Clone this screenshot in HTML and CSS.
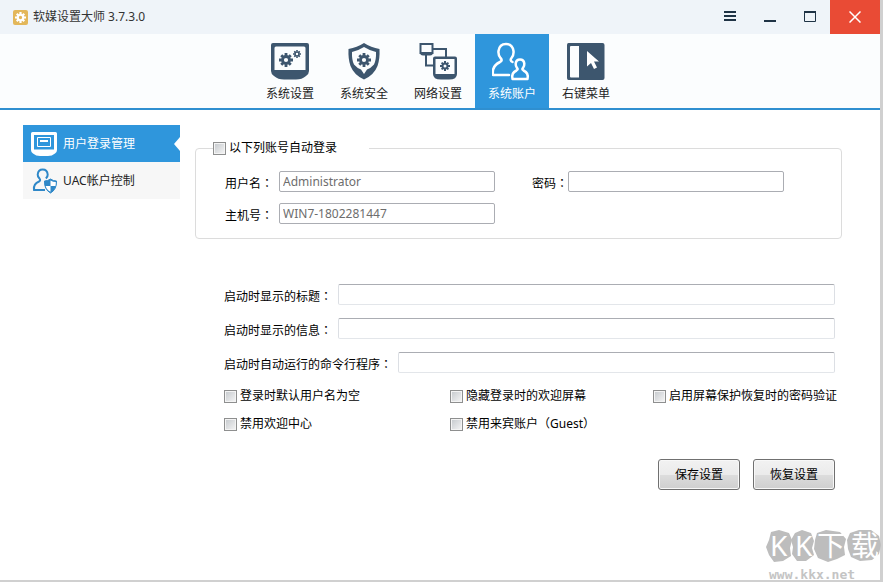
FILE: index.html
```
<!DOCTYPE html>
<html lang="zh-CN">
<head>
    <meta charset="UTF-8">
    <meta name="viewport" content="width=device-width, initial-scale=1.0">
    <title>软媒设置大师</title>
    <link rel="stylesheet" href="styles.css">
</head>
<body>

    <!-- shared gear shape -->
    <svg class="defs" width="0" height="0">
        <symbol id="gear" viewBox="-10 -10 20 20">
            <circle r="5" fill="none" stroke="currentColor" stroke-width="4"/>
            <path d="M0-6v-4M0 6v4M-6 0h-4M6 0h4M4.2-4.2l2.6-2.6M4.2 4.2l2.6 2.6M-4.2 4.2l-2.6 2.6M-4.2-4.2l-2.6-2.6" stroke="currentColor" stroke-width="4"/>
        </symbol>
    </svg>

    <div class="window">
        <header class="titlebar">
            <span class="logo"><svg width="11" height="11"><use href="#gear"/></svg></span>
            <h1>软媒设置大师 3.7.3.0</h1>
            <div class="window-buttons">
                <button aria-label="菜单"><svg width="12" height="12" viewBox="0 0 12 12"><path d="M0 1h12M0 5h12M0 9h12" stroke="currentColor" stroke-width="2"/></svg></button>
                <button aria-label="最小化"><svg width="12" height="12" viewBox="0 0 12 12"><path d="M0 10h12" stroke="currentColor" stroke-width="2"/></svg></button>
                <button aria-label="最大化"><svg width="12" height="12" viewBox="0 0 12 12"><path d="M.5 1v9.500h11V1" fill="none" stroke="currentColor"/><path d="M0 1h12" stroke="currentColor" stroke-width="2"/></svg></button>
                <button class="close" aria-label="关闭"><svg width="12" height="12" viewBox="0 0 12 12"><path d="M.5.5l11 11M11.500.5l-11 11" stroke="currentColor" stroke-width="1.500"/></svg></button>
            </div>
        </header>

        <nav class="tabs">
            <a href="#">
                <svg width="40" height="40" viewBox="0 0 40 40">
                    <path fill="currentColor" fill-rule="evenodd" d="M3 2h34q2 0 2 2v26q0 3-3 5-4 3.500-10 3.500H14Q8 38.500 4 35q-3-2-3-5V4q0-2 2-2zM6 5.500q-1.500 0-1.500 1.500v22h31V7q0-1.500-1.500-1.500z"/>
                    <use href="#gear" x="9" y="12" width="14" height="14"/>
                    <use href="#gear" x="23" y="9" width="8" height="8"/>
                </svg>
                系统设置
            </a>
            <a href="#">
                <svg width="40" height="40" viewBox="0 0 40 40">
                    <path fill="currentColor" fill-rule="evenodd" d="M20 2q7 4.500 15.500 6 .5 10-2 17Q30 34 20 38.500 10 34 6.500 25 4 18 4.500 8 13 6.500 20 2zM20 6q-5.500 3.500-12 5-.3 8 2 12.500Q13 27 17 28.500L20 33l3-4.500q4-1.500 7-5 2.300-4.500 2-12.500-6.500-1.500-12-5z"/>
                    <use href="#gear" x="13" y="12" width="14" height="14"/>
                </svg>
                系统安全
            </a>
            <a href="#">
                <svg width="40" height="40" viewBox="0 0 40 40">
                    <path fill="none" stroke="currentColor" stroke-width="2" d="M15 8h13v8M8 14v10.500h8"/>
                    <path fill="none" stroke="currentColor" stroke-width="2" d="M2.500 3h12v9h-12z"/>
                    <path fill="currentColor" d="M2 11h13q0 3.500-3 3.500H5Q2 14.500 2 11z"/>
                    <path fill="currentColor" fill-rule="evenodd" d="M17 15.500h20q2 0 2 2V33q0 5.500-8 5.500h-8q-8 0-8-5.500V17.500q0-2 2-2zM17.500 18v15h19V18z"/>
                    <use href="#gear" x="22" y="20" width="10" height="10"/>
                </svg>
                网络设置
            </a>
            <a href="#" class="active">
                <svg width="40" height="40" viewBox="0 0 40 40">
                    <g fill="none" stroke="currentColor" stroke-width="2.500" stroke-linejoin="round" stroke-linecap="round">
                        <path d="M17 34H1q-1.500-9 7-13 3-1.500.5-4-2.500-3-2-7Q7.500 3 14 3t7.500 7q.5 4-2 7-2 2.500 1 4"/>
                        <path d="M20.500 38q-1.500-6 4-8.500 2-1 .5-2.500-1.500-2-1.300-4.500.5-4 4.300-4t4.300 4q.2 2.500-1.300 4.500-1.500 1.500.5 2.500 5.500 2.500 4 8.500z"/>
                    </g>
                </svg>
                系统账户
            </a>
            <a href="#">
                <svg width="40" height="40" viewBox="0 0 40 40">
                    <path fill="currentColor" fill-rule="evenodd" d="M2.500 2h34q2 0 2 2v33q0 2-2 2h-34q-1.500 0-1.500-2V4q0-2 1.500-2zM5 5q-1 0-1 1v29.500q0 1 1 1h8V5z"/>
                    <path fill="#fff" d="M21 10v15.500l4-3.500 3 6 3-1.500-3-6h5z"/>
                </svg>
                右键菜单
            </a>
        </nav>

        <div class="body">
            <aside class="sidebar">
                <a href="#" class="active">
                    <svg width="26" height="26" viewBox="0 0 26 26">
                        <path fill="currentColor" fill-rule="evenodd" d="M1.500 1h23Q26 1 26 2.500V19q0 2-2 3.500-3 2.500-7 2.500H9q-4 0-7-2.500Q0 21 0 19V2.500Q0 1 1.500 1zM3 4v14.500h20V4z"/>
                        <path fill="none" stroke="currentColor" d="M6.500 6.500h13v9h-13z"/>
                        <path stroke="currentColor" stroke-width="2" d="M9 10h8"/>
                    </svg>
                    用户登录管理
                </a>
                <a href="#">
                    <svg class="blue" width="26" height="26" viewBox="0 0 26 26">
                        <path fill="none" stroke="currentColor" stroke-width="2" stroke-linejoin="round" d="M14 22H3q-1-6 5-8.500 2-1 .5-3Q6.500 8.500 6.700 6.500q.5-5 5-5t5 5q.2 2-1.800 4"/>
                        <path fill="currentColor" stroke="currentColor" d="M19.500 11q2.800 2 6 2 .3 8.500-6 12-6.300-3.500-6-12 3.200 0 6-2z"/>
                        <path fill="#fff" d="M19.500 12.500V18h5q.4-2 .3-4-2.800 0-5.300-1.500zM14.700 18h4.800v5.800q-4-2-4.800-5.800z"/>
                    </svg>
                    UAC帐户控制
                </a>
            </aside>

            <main>
                <fieldset>
                    <legend>
                        <label class="check"><input type="checkbox">以下列账号自动登录</label>
                    </legend>
                    <div class="login-row">
                        <label for="userName">用户名<span class="mark" lang="zh-TW">：</span></label>
                        <input type="text" id="userName" value="Administrator">
                        <label for="password" class="password-label">密码<span class="mark" lang="zh-TW">：</span></label>
                        <input type="password" id="password">
                    </div>
                    <div class="login-row">
                        <label for="hostName">主机号<span class="mark" lang="zh-TW">：</span></label>
                        <input type="text" id="hostName" value="WIN7-1802281447">
                    </div>
                </fieldset>

                <form class="startup">
                    <div class="row">
                        <label for="bootTitle">启动时显示的标题<span class="mark" lang="zh-TW">：</span></label>
                        <input type="text" id="bootTitle">
                    </div>
                    <div class="row">
                        <label for="bootMessage">启动时显示的信息<span class="mark" lang="zh-TW">：</span></label>
                        <input type="text" id="bootMessage">
                    </div>
                    <div class="row">
                        <label for="bootCommand">启动时自动运行的命令行程序<span class="mark" lang="zh-TW">：</span></label>
                        <input type="text" id="bootCommand">
                    </div>
                    <div class="checks">
                        <label class="check"><input type="checkbox">登录时默认用户名为空</label>
                        <label class="check"><input type="checkbox">隐藏登录时的欢迎屏幕</label>
                        <label class="check"><input type="checkbox">启用屏幕保护恢复时的密码验证</label>
                        <label class="check"><input type="checkbox">禁用欢迎中心</label>
                        <label class="check"><input type="checkbox"><span>禁用来宾账户<span class="mark" lang="zh-TW">（</span>Guest<span class="mark" lang="zh-TW">）</span></span></label>
                    </div>
                    <div class="actions">
                        <button type="button">保存设置</button>
                        <button type="button">恢复设置</button>
                    </div>
                </form>
            </main>
        </div>
    </div>

    <!-- site mark in the corner -->
    <svg class="watermark" width="117" height="70" viewBox="0 -16 117 70">
        <g fill="#bdbdbd">
            <path d="M5 4l8-2 10 3 3 7-2 8 1 8-8 5-9 1-5-7-3-8 3-7z"/>
            <path d="M29 5l7-3 9 3 3 8-2 7 2 7-8 6-9 0-5-7 1-7-2-7z"/>
            <path d="M51 5l9-3 14 2 6 7-2 8 1 8-8 4-9 3-10-4-4-9 1-9z"/>
            <path d="M84 5l9-3 12 0 8 6 2 9-2 9-7 6-12 1-9-4-3-8-1-9z"/>
        </g>
        <g class="watermark-name">
            <text x="4" y="28">K</text>
            <text x="29" y="28">K</text>
            <text x="51" y="28">下</text>
            <text x="85" y="28">载</text>
        </g>
        <text class="watermark-url" x="3" y="51">www.kkx.net</text>
    </svg>

</body>
</html>
```
FILE: styles.css
```
* {
    box-sizing: border-box;
}
body {
    margin: 0;
    font-family: "Noto Sans", "Noto Sans CJK SC", sans-serif;
    font-size: 12px;
    line-height: 18px;
    color: #000;
    background: #fff;
}
a {
    color: inherit;
    text-decoration: none;
}
button, input {
    font: inherit;
    margin: 0;
}
.defs {
    position: absolute;
}
.window {
    min-height: 100vh;
    border-right: 3px solid #d0d0d0;
    border-bottom: 2px solid #d0d0d0;
}

/* title bar */
.titlebar {
    display: flex;
    align-items: center;
    height: 34px;
    padding-left: 13px;
    background: #eff4f9;
}
.logo {
    display: flex;
    align-items: center;
    justify-content: center;
    width: 15px;
    height: 15px;
    margin-right: 5px;
    border-radius: 2px;
    background: #e3b75a;
    color: #fff;
}
h1 {
    margin: 0;
    font-size: 12px;
    font-weight: normal;
    color: #333;
}
.window-buttons {
    display: flex;
    margin-left: auto;
}
.window-buttons button {
    display: flex;
    align-items: center;
    justify-content: center;
    width: 40px;
    height: 34px;
    padding: 0;
    border: none;
    background: none;
    color: #1f3345;
}
.window-buttons .close {
    width: 50px;
    background: #e94b35;
    color: #fff;
}

/* top tabs */
.tabs {
    display: flex;
    justify-content: center;
    padding-right: 4px;
    background: #fbfdfe;
    border-bottom: 2px solid #2f8fd0;
}
.tabs a {
    display: flex;
    flex-direction: column;
    align-items: center;
    gap: 4px;
    width: 74px;
    height: 74px;
    padding-top: 7px;
    color: #222;
}
.tabs svg {
    color: #3d566e;
}
.tabs .active {
    background: #2f96dc;
    color: #fff;
}
.tabs .active svg {
    color: #fff;
}

.body {
    display: flex;
    gap: 15px;
    padding: 15px 38px 15px 23px;
}

/* left menu */
.sidebar {
    flex: none;
    width: 157px;
}
.sidebar a {
    display: flex;
    align-items: center;
    gap: 6px;
    height: 37px;
    padding-left: 8px;
    background: #f7f7f7;
    color: #222;
}
.sidebar .active {
    background: #2f96dc;
    color: #fff;
}
.sidebar .active::after {
    content: "";
    margin-left: auto;
    border: 7px solid transparent;
    border-left: none;
    border-right: 6px solid #fff;
}
.blue {
    color: #2f88c8;
}

/* settings */
main {
    flex: 1;
    min-width: 0;
    padding-top: 14px;
}
fieldset {
    margin: 0;
    padding: 14px 17px 14px;
    border: 1px solid #dcdcdc;
    border-radius: 4px;
}
legend {
    width: 156px;
    padding: 0;
}
label {
    white-space: nowrap;
}
/* punctuation centred in its cell */
.mark {
    font-family: "Noto Sans CJK TC", sans-serif;
    line-height: 1;
}
.check {
    display: flex;
    align-items: center;
    gap: 3px;
}
.check input {
    appearance: none;
    flex: none;
    width: 13px;
    height: 13px;
    border: 1px solid #8e8f8f;
    background: linear-gradient(135deg, #c4c8cc, #f6f6f6);
    box-shadow: inset 0 0 0 1px #f4f4f4;
}
.check input:checked {
    background: #2f96dc;
}
input[type="text"], input[type="password"] {
    height: 21px;
    padding: 0 3px;
    border: 1px solid #abadb3;
    border-radius: 2px;
    background: #fff;
    color: #6d6d6d;
    outline: none;
}
.login-row {
    display: flex;
    align-items: center;
    padding-left: 12px;
}
.login-row + .login-row {
    margin-top: 11px;
}
.login-row label, .row label {
    padding-top: 4px;
    margin-right: 6px;
    line-height: 17px;
}
.login-row input {
    width: 216px;
}
.login-row .password-label {
    margin: 0 0 0 37px;
}
.startup {
    display: flex;
    flex-direction: column;
    gap: 13px;
    margin-top: 45px;
    padding: 0 7px 0 29px;
}
.row {
    display: flex;
    align-items: center;
}
.row input[type="text"] {
    flex: 1;
    border-color: #abadb3 #dcdfe4 #e3e6ea;
}
.checks {
    display: grid;
    grid-template-columns: 226px 203px auto;
    row-gap: 10px;
    margin-top: 1px;
}
.actions {
    display: flex;
    justify-content: flex-end;
    gap: 13px;
    margin-top: 13px;
}
.actions button {
    width: 82px;
    height: 31px;
    padding: 0;
    border: 1px solid #707070;
    border-radius: 3px;
    background: linear-gradient(#f2f2f2, #ebebeb 50%, #dddddd 50%, #cfcfcf);
    box-shadow: inset 0 0 0 1px #f8f8f8;
    color: #000;
}

/* watermark */
.watermark {
    position: absolute;
    right: 0;
    bottom: 0;
    pointer-events: none;
}
.watermark-name {
    fill: #fff;
    font-size: 28px;
}
.watermark-url {
    fill: #c4c4c4;
    font-family: "DejaVu Sans Mono", monospace;
    font-size: 13px;
    font-weight: bold;
}
```
